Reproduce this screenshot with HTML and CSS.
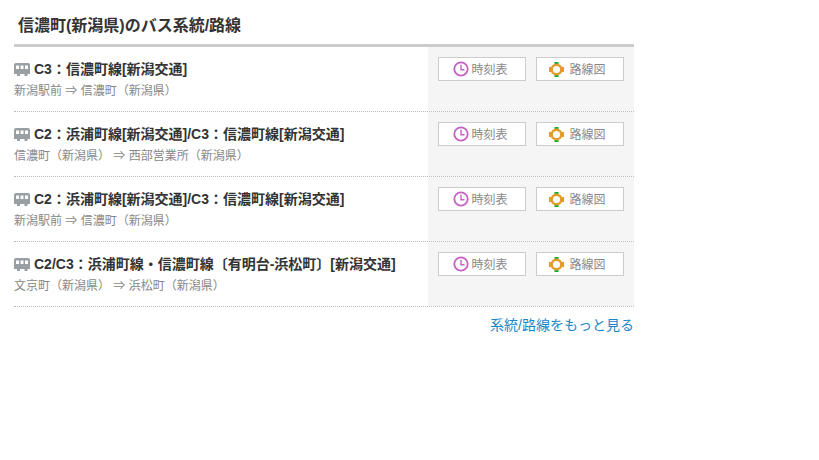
FILE: index.html
```html
<!DOCTYPE html>
<html lang="ja">
<head>
    <meta charset="UTF-8">
    <meta name="viewport" content="width=device-width, initial-scale=1.0">
    <title>信濃町(新潟県)のバス系統/路線</title>
    <link rel="stylesheet" href="styles.css">
</head>
<body>
<svg class="defs" width="0" height="0">
    <symbol id="bus" viewBox="0 0 16 13">
        <path fill="#98a0a5" fill-rule="evenodd" d="M2 0h12a2 2 0 0 1 2 2v9H0V2a2 2 0 0 1 2-2zM2 2.500V6h3V2.500zm4.500 0V6h3V2.500zm4.500 0V6h3V2.500z"/>
        <rect fill="#98a0a5" x="3" y="11" width="3" height="2"/>
        <rect fill="#98a0a5" x="10.500" y="11" width="3" height="2"/>
    </symbol>
    <symbol id="clock" viewBox="0 0 16 16">
        <circle cx="8" cy="8" r="6.700" fill="#fff" stroke="#c560c5" stroke-width="1.800"/>
        <path d="M8 3.800V8.800H11.500" fill="none" stroke="#c560c5" stroke-width="1.400"/>
    </symbol>
    <symbol id="map" viewBox="0 0 15 15">
        <rect x="5.500" y="0" width="4" height="15" fill="#0ab02a"/>
        <rect x="0" y="5" width="15" height="5" fill="#e59a2c"/>
        <circle cx="7.500" cy="7.500" r="4.800" fill="#fff" stroke="#e59a2c" stroke-width="2.400"/>
    </symbol>
</svg>

<div class="box">
    <h2 class="box-title">信濃町(新潟県)のバス系統/路線</h2>

    <div class="route">
        <div class="route-info">
            <div class="route-name"><svg class="bus-icon"><use href="#bus"/></svg>C3：信濃町線[新潟交通]</div>
            <div class="route-dest">新潟駅前 ⇒ 信濃町（新潟県）</div>
        </div>
        <div class="route-btns">
            <a class="btn"><svg class="btn-icon"><use href="#clock"/></svg>時刻表</a>
            <a class="btn"><svg class="map-icon"><use href="#map"/></svg>路線図</a>
        </div>
    </div>

    <div class="route">
        <div class="route-info">
            <div class="route-name"><svg class="bus-icon"><use href="#bus"/></svg>C2：浜浦町線[新潟交通]/C3：信濃町線[新潟交通]</div>
            <div class="route-dest">信濃町（新潟県） ⇒ 西部営業所（新潟県）</div>
        </div>
        <div class="route-btns">
            <a class="btn"><svg class="btn-icon"><use href="#clock"/></svg>時刻表</a>
            <a class="btn"><svg class="map-icon"><use href="#map"/></svg>路線図</a>
        </div>
    </div>

    <div class="route">
        <div class="route-info">
            <div class="route-name"><svg class="bus-icon"><use href="#bus"/></svg>C2：浜浦町線[新潟交通]/C3：信濃町線[新潟交通]</div>
            <div class="route-dest">新潟駅前 ⇒ 信濃町（新潟県）</div>
        </div>
        <div class="route-btns">
            <a class="btn"><svg class="btn-icon"><use href="#clock"/></svg>時刻表</a>
            <a class="btn"><svg class="map-icon"><use href="#map"/></svg>路線図</a>
        </div>
    </div>

    <div class="route">
        <div class="route-info">
            <div class="route-name"><svg class="bus-icon"><use href="#bus"/></svg>C2/C3：浜浦町線・信濃町線〔有明台-浜松町〕[新潟交通]</div>
            <div class="route-dest">文京町（新潟県） ⇒ 浜松町（新潟県）</div>
        </div>
        <div class="route-btns">
            <a class="btn"><svg class="btn-icon"><use href="#clock"/></svg>時刻表</a>
            <a class="btn"><svg class="map-icon"><use href="#map"/></svg>路線図</a>
        </div>
    </div>

    <div class="more"><a class="more-link">系統/路線をもっと見る</a></div>
</div>
</body>
</html>
```

FILE: styles.css
```css
body {
    margin: 0;
    background: white;
    color: #333;
    font-family: "Liberation Sans", "Noto Sans CJK JP", sans-serif;
}

.defs {
    position: absolute;
}

.box {
    width: 620px;
    margin-left: 14px;
}

.box-title {
    margin: 0;
    height: 44px;
    padding: 15px 0 0 4px;
    box-sizing: border-box;
    font-size: 16px;
    line-height: 21px;
    font-weight: bold;
}

.route {
    display: flex;
    height: 65px;
    box-sizing: border-box;
    border-bottom: 1px dotted #bbb;
}

.box-title + .route {
    height: 68px;
    border-top: 3px solid #ccc;
}

.route-info {
    width: 414px;
    padding-top: 11px;
    box-sizing: border-box;
}

.route-name {
    display: flex;
    align-items: center;
    gap: 4px;
    height: 20px;
    font-size: 14px;
    font-weight: bold;
}

.bus-icon {
    width: 16px;
    height: 13px;
    flex-shrink: 0;
    margin-top: 2px;
}

.route-dest {
    margin-top: 4px;
    font-size: 12px;
    line-height: 18px;
    color: #888;
}

.route-btns {
    display: flex;
    gap: 10px;
    width: 206px;
    padding: 10px 10px 0;
    box-sizing: border-box;
    background: #f5f5f5;
}

.btn {
    display: flex;
    align-items: center;
    justify-content: center;
    gap: 2px;
    width: 88px;
    height: 24px;
    padding: 0 3px 2px 0;
    box-sizing: border-box;
    background: white;
    border: 1px solid #ccc;
    font-size: 12px;
    color: #888;
}

.btn-icon {
    width: 16px;
    height: 16px;
    margin-top: 2px;
}

.map-icon {
    width: 15px;
    height: 15px;
    margin: 2px 3px 0 -2px;
}

.more {
    margin-top: 8px;
    text-align: right;
    font-size: 14px;
    line-height: 20px;
}

.more-link {
    color: #1a87c8;
}
```
